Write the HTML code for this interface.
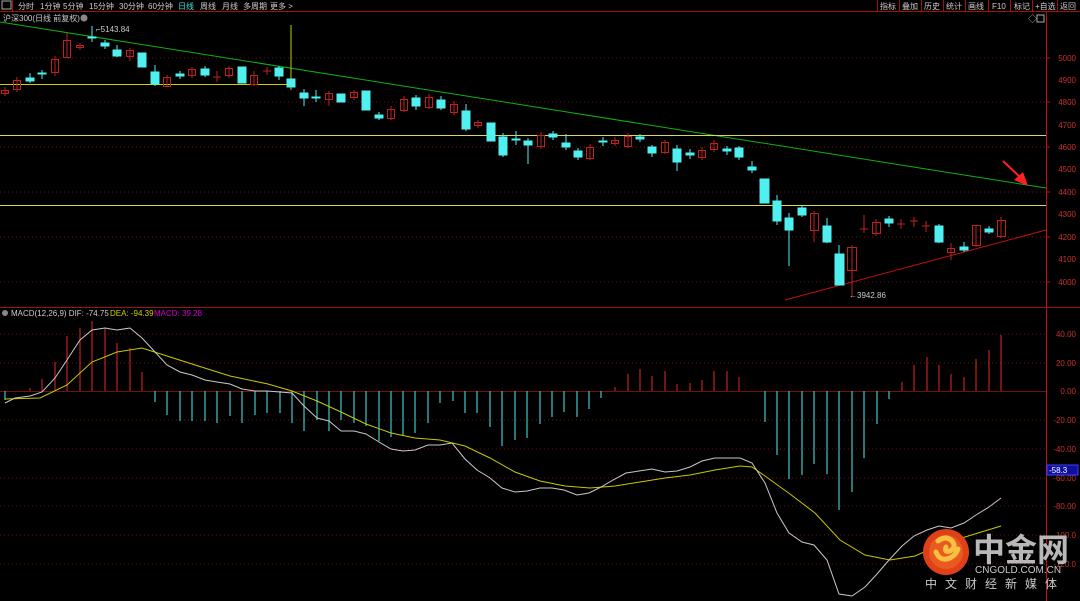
<!DOCTYPE html>
<html><head><meta charset="utf-8"><style>
html,body{margin:0;padding:0;background:#000;width:1080px;height:601px;overflow:hidden}
svg{display:block}
text{font-family:"Liberation Sans","Noto Sans CJK SC",sans-serif}
</style></head><body>
<svg width="1080" height="601" viewBox="0 0 1080 601" xmlns="http://www.w3.org/2000/svg">
<rect width="1080" height="601" fill="#000"/>
<!-- header -->
<line x1="0" y1="11.5" x2="1080" y2="11.5" stroke="#a01010"/>
<rect x="2" y="1" width="9" height="8" fill="none" stroke="#aaa"/><line x1="12.5" y1="0" x2="12.5" y2="11" stroke="#a01010"/>
<g font-size="8" fill="#ccc">
<text x="18" y="9">分时</text><text x="40" y="9">1分钟</text><text x="63" y="9">5分钟</text><text x="89" y="9">15分钟</text><text x="119" y="9">30分钟</text><text x="148" y="9">60分钟</text>
<text x="178" y="9" fill="#3ee0e0">日线</text><text x="200" y="9">周线</text><text x="222" y="9">月线</text><text x="243" y="9">多周期</text><text x="270" y="9">更多 &gt;</text>
<text x="880" y="9">指标</text><text x="902" y="9">叠加</text><text x="924" y="9">历史</text><text x="946" y="9">统计</text><text x="968" y="9">画线</text><text x="992" y="9">F10</text><text x="1014" y="9">标记</text><text x="1035" y="9">+自选</text><text x="1060" y="9">返回</text>
</g>
<g stroke="#a01010"><line x1="877.5" y1="0" x2="877.5" y2="11"/><line x1="899.5" y1="0" x2="899.5" y2="11"/><line x1="921.5" y1="0" x2="921.5" y2="11"/><line x1="943.5" y1="0" x2="943.5" y2="11"/><line x1="965.5" y1="0" x2="965.5" y2="11"/><line x1="988.5" y1="0" x2="988.5" y2="11"/><line x1="1010.5" y1="0" x2="1010.5" y2="11"/><line x1="1032.5" y1="0" x2="1032.5" y2="11"/><line x1="1057.5" y1="0" x2="1057.5" y2="11"/></g>
<!-- axes -->
<line x1="1046.5" y1="12" x2="1046.5" y2="601" stroke="#c01010"/>
<line x1="0" y1="307.5" x2="1080" y2="307.5" stroke="#a01010"/>
<text x="3" y="21" font-size="8" fill="#ccc">沪深300(日线 前复权)</text><circle cx="84" cy="18" r="3.5" fill="#888"/>
<text x="1028" y="22" font-size="9" fill="#aaa">◇</text><rect x="1037" y="15" width="7" height="7" fill="none" stroke="#aaa"/>
<!-- grid -->
<g stroke="#701010" stroke-dasharray="1,3">
<line x1="0" y1="58" x2="1046" y2="58"/><line x1="0" y1="102" x2="1046" y2="102"/><line x1="0" y1="147" x2="1046" y2="147"/><line x1="0" y1="192" x2="1046" y2="192"/><line x1="0" y1="237" x2="1046" y2="237"/><line x1="0" y1="282" x2="1046" y2="282"/>
<line x1="0" y1="334" x2="1046" y2="334"/><line x1="0" y1="363" x2="1046" y2="363"/><line x1="0" y1="420" x2="1046" y2="420"/><line x1="0" y1="449" x2="1046" y2="449"/><line x1="0" y1="478" x2="1046" y2="478"/><line x1="0" y1="506" x2="1046" y2="506"/><line x1="0" y1="535" x2="1046" y2="535"/><line x1="0" y1="564" x2="1046" y2="564"/>
</g>
<line x1="0" y1="391.5" x2="1046" y2="391.5" stroke="#701010"/>
<g font-size="8" fill="#c83030" text-anchor="end">
<text x="1076" y="61">5000</text><text x="1076" y="83">4900</text><text x="1076" y="105">4800</text><text x="1076" y="128">4700</text><text x="1076" y="150">4600</text><text x="1076" y="172">4500</text><text x="1076" y="195">4400</text><text x="1076" y="217">4300</text><text x="1076" y="240">4200</text><text x="1076" y="262">4100</text><text x="1076" y="285">4000</text>
<text x="1076" y="337">40.00</text><text x="1076" y="366">20.00</text><text x="1076" y="394">0.00</text><text x="1076" y="423">-20.00</text><text x="1076" y="452">-40.00</text><text x="1076" y="481">-60.00</text><text x="1076" y="509">-80.00</text><text x="1076" y="538">-100.0</text><text x="1076" y="567">-120.0</text>
</g>
<g stroke="#c01010"><line x1="1046" y1="58" x2="1050" y2="58"/><line x1="1046" y1="102" x2="1050" y2="102"/><line x1="1046" y1="147" x2="1050" y2="147"/><line x1="1046" y1="192" x2="1050" y2="192"/><line x1="1046" y1="237" x2="1050" y2="237"/><line x1="1046" y1="282" x2="1050" y2="282"/></g>
<rect x="1047" y="465" width="31" height="10" fill="#1010a0" stroke="#4040ff"/><text x="1049" y="473" font-size="8" fill="#fff">-58.3</text>
<!-- trend lines -->
<line x1="0" y1="22" x2="1046" y2="188" stroke="#10b010" stroke-width="1"/>
<line x1="0" y1="84.5" x2="290" y2="84.5" stroke="#d0d000"/>
<line x1="0" y1="135.5" x2="1046" y2="135.5" stroke="#d8d860"/>
<line x1="0" y1="205.5" x2="1046" y2="205.5" stroke="#d8d860"/>
<line x1="785" y1="300" x2="1046" y2="230" stroke="#c01010"/>
<line x1="1003" y1="161" x2="1022" y2="179" stroke="#ff2020" stroke-width="2"/><polygon points="1028,186 1014,180 1023,172" fill="#ff2020"/>
<text x="96" y="32" font-size="8" fill="#ccc">⌐5143.84</text>
<text x="849" y="298" font-size="8" fill="#ccc">←3942.86</text>
<!-- candles: cyan filled -->
<g fill="#50f0f0" stroke="#50f0f0" stroke-width="1">
<line x1="30" y1="73" x2="30" y2="83"/><rect x="26" y="78" width="8" height="3"/>
<line x1="42" y1="70" x2="42" y2="79"/><rect x="38" y="73" width="8" height="1"/>
<line x1="92" y1="26" x2="92" y2="42"/><rect x="88" y="37" width="8" height="1"/>
<line x1="105" y1="40" x2="105" y2="49"/><rect x="101" y="43" width="8" height="3"/>
<line x1="117" y1="45" x2="117" y2="57"/><rect x="113" y="50" width="8" height="6"/>
<line x1="142" y1="53" x2="142" y2="67"/><rect x="138" y="53" width="8" height="14"/>
<line x1="155" y1="65" x2="155" y2="86"/><rect x="151" y="72" width="8" height="12"/>
<line x1="180" y1="71" x2="180" y2="79"/><rect x="176" y="74" width="8" height="2"/>
<line x1="205" y1="66" x2="205" y2="77"/><rect x="201" y="69" width="8" height="6"/>
<rect x="238" y="67" width="8" height="16"/>
<line x1="279" y1="66" x2="279" y2="80"/><rect x="275" y="68" width="8" height="8"/>
<line x1="291" y1="25" x2="291" y2="90" stroke="#c8c800"/><rect x="287" y="79" width="8" height="8"/>
<line x1="304" y1="89" x2="304" y2="106"/><rect x="300" y="93" width="8" height="5"/>
<line x1="316" y1="90" x2="316" y2="102"/><rect x="312" y="97" width="8" height="1"/>
<rect x="337" y="94" width="8" height="8"/>
<rect x="362" y="91" width="8" height="19"/>
<line x1="379" y1="112" x2="379" y2="120"/><rect x="375" y="115" width="8" height="3"/>
<line x1="416" y1="95" x2="416" y2="110"/><rect x="412" y="98" width="8" height="8"/>
<line x1="441" y1="96" x2="441" y2="110"/><rect x="437" y="100" width="8" height="8"/>
<line x1="466" y1="104" x2="466" y2="131"/><rect x="462" y="111" width="8" height="18"/>
<rect x="487" y="123" width="8" height="18"/>
<line x1="503" y1="133" x2="503" y2="157"/><rect x="499" y="137" width="8" height="18"/>
<line x1="516" y1="131" x2="516" y2="145"/><rect x="512" y="139" width="8" height="1"/>
<line x1="528" y1="138" x2="528" y2="164"/><rect x="524" y="141" width="8" height="4"/>
<line x1="553" y1="131" x2="553" y2="140"/><rect x="549" y="134" width="8" height="3"/>
<line x1="566" y1="134" x2="566" y2="150"/><rect x="562" y="143" width="8" height="4"/>
<line x1="578" y1="148" x2="578" y2="160"/><rect x="574" y="151" width="8" height="6"/>
<line x1="603" y1="137" x2="603" y2="146"/><rect x="599" y="141" width="8" height="1"/>
<line x1="640" y1="134" x2="640" y2="142"/><rect x="636" y="137" width="8" height="2"/>
<line x1="652" y1="145" x2="652" y2="157"/><rect x="648" y="147" width="8" height="6"/>
<line x1="677" y1="145" x2="677" y2="171"/><rect x="673" y="149" width="8" height="13"/>
<line x1="690" y1="149" x2="690" y2="159"/><rect x="686" y="153" width="8" height="2"/>
<line x1="727" y1="146" x2="727" y2="155"/><rect x="723" y="149" width="8" height="2"/>
<line x1="739" y1="146" x2="739" y2="160"/><rect x="735" y="148" width="8" height="9"/>
<line x1="752" y1="161" x2="752" y2="173"/><rect x="748" y="167" width="8" height="3"/>
<rect x="760" y="179" width="9" height="24"/>
<line x1="777" y1="195" x2="777" y2="225"/><rect x="773" y="201" width="8" height="20"/>
<line x1="789" y1="213" x2="789" y2="266"/><rect x="785" y="218" width="8" height="12"/>
<line x1="802" y1="205" x2="802" y2="217"/><rect x="798" y="208" width="8" height="7"/>
<line x1="827" y1="218" x2="827" y2="243"/><rect x="823" y="226" width="8" height="16"/>
<line x1="839" y1="245" x2="839" y2="285"/><rect x="835" y="254" width="9" height="31"/>
<line x1="889" y1="216" x2="889" y2="227"/><rect x="885" y="219" width="8" height="4"/>
<line x1="939" y1="224" x2="939" y2="243"/><rect x="935" y="226" width="8" height="16"/>
<line x1="964" y1="242" x2="964" y2="252"/><rect x="960" y="247" width="8" height="3"/>
<line x1="989" y1="226" x2="989" y2="234"/><rect x="985" y="229" width="8" height="3"/>
</g>
<!-- candles: red hollow -->
<g fill="none" stroke="#c02020" stroke-width="1">
<line x1="5" y1="87" x2="5" y2="96"/><rect x="1.5" y="90.5" width="7" height="3"/>
<line x1="17" y1="77" x2="17" y2="92"/><rect x="13.5" y="80.5" width="7" height="9"/>
<line x1="55" y1="56" x2="55" y2="76"/><rect x="51.5" y="59.5" width="7" height="13"/>
<line x1="67" y1="33" x2="67" y2="58"/><rect x="63.5" y="40.5" width="7" height="17"/>
<line x1="80" y1="43" x2="80" y2="50"/><rect x="76.5" y="45.5" width="7" height="2"/>
<line x1="130" y1="48" x2="130" y2="61"/><rect x="126.5" y="50.5" width="7" height="6"/>
<line x1="167" y1="75" x2="167" y2="87"/><rect x="163.5" y="77.5" width="7" height="9"/>
<line x1="192" y1="67" x2="192" y2="78"/><rect x="188.5" y="69.5" width="7" height="6"/>
<line x1="217" y1="71" x2="217" y2="82"/><line x1="213" y1="77" x2="221" y2="77"/>
<line x1="229" y1="66" x2="229" y2="78"/><rect x="225.5" y="68.5" width="7" height="7"/>
<line x1="254" y1="71" x2="254" y2="86"/><rect x="250.5" y="75.5" width="7" height="9"/>
<line x1="267" y1="67" x2="267" y2="75"/><line x1="263" y1="71" x2="271" y2="71"/>
<line x1="329" y1="91" x2="329" y2="106"/><rect x="325.5" y="93.5" width="7" height="6"/>
<line x1="354" y1="90" x2="354" y2="100"/><rect x="350.5" y="92.5" width="7" height="5"/>
<line x1="391" y1="106" x2="391" y2="120"/><rect x="387.5" y="109.5" width="7" height="9"/>
<line x1="404" y1="96" x2="404" y2="112"/><rect x="400.5" y="99.5" width="7" height="11"/>
<line x1="429" y1="94" x2="429" y2="109"/><rect x="425.5" y="97.5" width="7" height="10"/>
<line x1="454" y1="101" x2="454" y2="115"/><rect x="450.5" y="104.5" width="7" height="8"/>
<line x1="478" y1="120" x2="478" y2="128"/><rect x="474.5" y="122.5" width="7" height="3"/>
<line x1="541" y1="132" x2="541" y2="149"/><rect x="537.5" y="135.5" width="7" height="11"/>
<line x1="590" y1="144" x2="590" y2="160"/><rect x="586.5" y="147.5" width="7" height="11"/>
<line x1="615" y1="137" x2="615" y2="146"/><rect x="611.5" y="140.5" width="7" height="3"/>
<line x1="628" y1="133" x2="628" y2="148"/><rect x="624.5" y="136.5" width="7" height="10"/>
<line x1="665" y1="140" x2="665" y2="154"/><rect x="661.5" y="142.5" width="7" height="10"/>
<line x1="702" y1="147" x2="702" y2="160"/><rect x="698.5" y="150.5" width="7" height="7"/>
<line x1="714" y1="140" x2="714" y2="152"/><rect x="710.5" y="143.5" width="7" height="6"/>
<line x1="814" y1="211" x2="814" y2="242"/><rect x="810.5" y="213.5" width="8" height="17"/>
<line x1="852" y1="245" x2="852" y2="296"/><rect x="847.5" y="247.5" width="9" height="23"/>
<line x1="864" y1="215" x2="864" y2="233"/><line x1="860" y1="229" x2="868" y2="229"/>
<line x1="876" y1="219" x2="876" y2="236"/><rect x="872.5" y="222.5" width="8" height="11"/>
<line x1="901" y1="219" x2="901" y2="229"/><line x1="897" y1="224" x2="905" y2="224"/>
<line x1="914" y1="217" x2="914" y2="227"/><line x1="910" y1="221" x2="918" y2="221"/>
<line x1="926" y1="221" x2="926" y2="232"/><line x1="922" y1="226" x2="930" y2="226"/>
<line x1="951" y1="243" x2="951" y2="260"/><rect x="947.5" y="248.5" width="7" height="4"/>
<line x1="976" y1="225" x2="976" y2="247"/><rect x="972.5" y="225.5" width="8" height="20"/>
<line x1="1001" y1="217" x2="1001" y2="238"/><rect x="997.5" y="220.5" width="8" height="16"/>
</g>
<!-- MACD legend -->
<circle cx="5" cy="313" r="3" fill="#888"/>
<text x="11" y="316" font-size="8" fill="#ccc">MACD(12,26,9) DIF: -74.75</text>
<text x="110" y="316" font-size="8" fill="#d0d000">DEA: -94.39</text>
<text x="154" y="316" font-size="8" fill="#d000d0">MACD: 39.28</text>
<!-- MACD histogram red -->
<g stroke="#c02020" stroke-width="1.2">
<line x1="30" y1="391" x2="30" y2="388"/><line x1="42" y1="391" x2="42" y2="379"/><line x1="55" y1="391" x2="55" y2="362"/><line x1="67" y1="391" x2="67" y2="336"/><line x1="80" y1="391" x2="80" y2="328"/><line x1="92" y1="391" x2="92" y2="321"/><line x1="105" y1="391" x2="105" y2="328"/><line x1="117" y1="391" x2="117" y2="343"/><line x1="130" y1="391" x2="130" y2="348"/><line x1="142" y1="391" x2="142" y2="372"/>
<line x1="615" y1="391" x2="615" y2="387"/><line x1="628" y1="391" x2="628" y2="374"/><line x1="640" y1="391" x2="640" y2="369"/><line x1="652" y1="391" x2="652" y2="376"/><line x1="665" y1="391" x2="665" y2="371"/><line x1="677" y1="391" x2="677" y2="384"/><line x1="690" y1="391" x2="690" y2="383"/><line x1="702" y1="391" x2="702" y2="380"/><line x1="714" y1="391" x2="714" y2="371"/><line x1="727" y1="391" x2="727" y2="371"/><line x1="739" y1="391" x2="739" y2="377"/>
<line x1="902" y1="391" x2="902" y2="382"/><line x1="914" y1="391" x2="914" y2="365"/><line x1="927" y1="391" x2="927" y2="357"/><line x1="939" y1="391" x2="939" y2="365"/><line x1="951" y1="391" x2="951" y2="374"/><line x1="964" y1="391" x2="964" y2="377"/><line x1="976" y1="391" x2="976" y2="359"/><line x1="989" y1="391" x2="989" y2="350"/><line x1="1001" y1="391" x2="1001" y2="335"/>
</g>
<g stroke="#40c8c8" stroke-width="1.2">
<line x1="5" y1="391" x2="5" y2="400"/>
<line x1="155" y1="391" x2="155" y2="402"/><line x1="167" y1="391" x2="167" y2="415"/><line x1="180" y1="391" x2="180" y2="421"/><line x1="192" y1="391" x2="192" y2="421"/><line x1="205" y1="391" x2="205" y2="421"/><line x1="217" y1="391" x2="217" y2="423"/><line x1="230" y1="391" x2="230" y2="416"/><line x1="242" y1="391" x2="242" y2="423"/><line x1="255" y1="391" x2="255" y2="415"/><line x1="267" y1="391" x2="267" y2="413"/><line x1="280" y1="391" x2="280" y2="413"/><line x1="292" y1="391" x2="292" y2="423"/><line x1="304" y1="391" x2="304" y2="431"/><line x1="317" y1="391" x2="317" y2="420"/><line x1="329" y1="391" x2="329" y2="431"/><line x1="341" y1="391" x2="341" y2="420"/><line x1="354" y1="391" x2="354" y2="423"/><line x1="366" y1="391" x2="366" y2="426"/><line x1="379" y1="391" x2="379" y2="441"/><line x1="391" y1="391" x2="391" y2="437"/><line x1="403" y1="391" x2="403" y2="436"/><line x1="415" y1="391" x2="415" y2="433"/><line x1="428" y1="391" x2="428" y2="423"/><line x1="440" y1="391" x2="440" y2="403"/><line x1="453" y1="391" x2="453" y2="401"/><line x1="465" y1="391" x2="465" y2="413"/><line x1="477" y1="391" x2="477" y2="413"/><line x1="490" y1="391" x2="490" y2="427"/><line x1="502" y1="391" x2="502" y2="446"/><line x1="515" y1="391" x2="515" y2="440"/><line x1="527" y1="391" x2="527" y2="438"/><line x1="540" y1="391" x2="540" y2="424"/><line x1="552" y1="391" x2="552" y2="417"/><line x1="564" y1="391" x2="564" y2="412"/><line x1="577" y1="391" x2="577" y2="417"/><line x1="589" y1="391" x2="589" y2="409"/><line x1="601" y1="391" x2="601" y2="398"/>
<line x1="765" y1="391" x2="765" y2="422"/><line x1="777" y1="391" x2="777" y2="455"/><line x1="789" y1="391" x2="789" y2="479"/><line x1="802" y1="391" x2="802" y2="475"/><line x1="814" y1="391" x2="814" y2="464"/><line x1="827" y1="391" x2="827" y2="474"/><line x1="839" y1="391" x2="839" y2="510"/><line x1="852" y1="391" x2="852" y2="492"/><line x1="864" y1="391" x2="864" y2="458"/><line x1="877" y1="391" x2="877" y2="424"/><line x1="889" y1="391" x2="889" y2="399"/>
</g>
<!-- DEA -->
<polyline fill="none" stroke="#c8c800" stroke-width="1" points="5,399 40,398 67,385 92,362 117,352 142,348 167,356 192,364 230,376 268,384 292,391 317,401 341,412 366,424 391,433 415,438 440,440 465,446 490,458 515,472 540,481 565,486 590,488 615,486 640,482 665,478 690,475 715,470 740,466 752,467 765,476 790,494 815,513 840,540 865,555 890,560 915,556 940,545 965,537 1001,526"/>
<!-- DIF -->
<polyline fill="none" stroke="#c8c8c8" stroke-width="1" points="5,403 15,398 30,396 42,392 55,378 67,360 80,340 92,330 105,328 117,330 130,328 142,338 155,352 167,365 180,372 192,375 205,380 217,382 230,384 242,389 255,391 267,391 280,392 292,393 304,406 317,418 329,421 341,431 354,431 366,434 379,442 391,449 403,451 415,450 428,445 440,445 452,443 465,459 477,470 490,478 502,488 515,492 527,491 540,488 552,488 564,490 577,495 589,493 601,487 613,480 626,473 639,471 652,469 665,472 677,471 690,467 702,461 715,458 727,458 740,458 752,463 765,483 777,513 789,533 802,542 814,545 827,560 839,594 852,596 865,587 877,574 889,560 902,546 914,536 927,530 939,526 951,528 964,523 976,515 989,507 1001,498"/>
<!-- logo -->
<circle cx="946" cy="552" r="23" fill="#e04018"/>
<circle cx="946" cy="552" r="17" fill="#e85a20"/>
<path d="M938,541 q8,-6 14,0 q5,6 -2,10 q-6,2 -4,-4 M936,552 q4,10 14,6 q6,-3 8,-9" fill="none" stroke="#f8c040" stroke-width="5" stroke-linecap="round"/>
<text x="973" y="561" font-size="32" font-weight="bold" fill="#b8b8b8" font-family="'Noto Sans CJK SC',sans-serif">中金网</text>
<text x="975" y="573" font-size="10" fill="#c8c8c8">CNGOLD.COM.CN</text>
<text x="925" y="588" font-size="12" fill="#c8c8c8" letter-spacing="8" font-family="'Noto Sans CJK SC',sans-serif">中文财经新媒体</text>
</svg>
</body></html>
